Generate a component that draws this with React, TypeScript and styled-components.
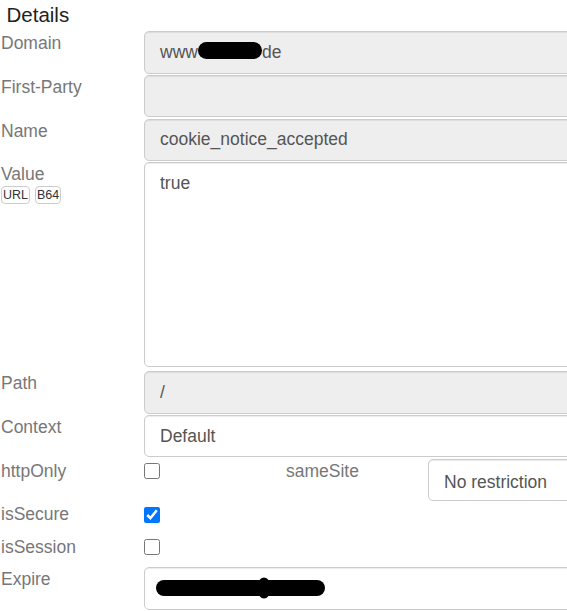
import React from "react";
import styled, { createGlobalStyle } from "styled-components";

const GlobalStyle = createGlobalStyle`
  html, body {
    margin: 0;
    padding: 0;
    background: #fff;
    overflow: hidden;
  }
  body {
    font-family: "Liberation Sans", Arial, sans-serif;
  }
`;

const Panel = styled.div`
  width: 760px;
  padding-left: 1px;
  box-sizing: border-box;
  font-size: 17.5px;
`;

const Heading = styled.h3`
  margin: 0;
  padding: 3px 0 4px 5.5px;
  font-size: 20.5px;
  line-height: 24px;
  font-weight: normal;
  color: #222;
`;

const Row = styled.div<{ $cols?: string; $height?: string; $gap?: string }>`
  display: grid;
  grid-template-columns: ${(p) => p.$cols ?? "143px 1fr"};
  height: ${(p) => p.$height ?? "auto"};
  margin-bottom: ${(p) => p.$gap ?? "1.25px"};
`;

const Label = styled.label`
  display: block;
  padding-top: 2px;
  line-height: 20px;
  font-size: 17.5px;
  color: #777;
`;

const LabelStack = styled.div`
  display: flex;
  flex-direction: column;
  gap: 2px;
`;

const Badges = styled.div`
  display: flex;
  gap: 5px;
`;

const Badge = styled.button`
  font-family: "Liberation Sans", Arial, sans-serif;
  font-size: 12.5px;
  line-height: 16px;
  height: 18px;
  padding: 0 1px;
  color: #333;
  background: #fff;
  border: 1px solid #ccc;
  border-radius: 4px;
  cursor: pointer;
`;

const fieldBase = `
  box-sizing: border-box;
  width: 100%;
  border: 1px solid #ccc;
  border-radius: 5px;
  box-shadow: inset 0 1px 1px rgba(0, 0, 0, 0.075);
  font-family: "Liberation Sans", Arial, sans-serif;
  font-size: 17.5px;
  color: #555;
  outline: none;
`;

const Input = styled.input<{ $readonly?: boolean }>`
  ${fieldBase}
  height: 42.5px;
  padding: 7.5px 15px;
  line-height: 25px;
  background: ${(p) => (p.$readonly ? "#eee" : "#fff")};
`;

const Field = styled.div<{ $readonly?: boolean }>`
  ${fieldBase}
  height: 42.5px;
  padding: 7.5px 15px;
  line-height: 25px;
  display: flex;
  align-items: center;
  white-space: nowrap;
  background: ${(p) => (p.$readonly ? "#eee" : "#fff")};
`;

const TextArea = styled.textarea`
  ${fieldBase}
  display: block;
  height: 205px;
  padding: 7.5px 15px;
  line-height: 25px;
  resize: none;
  background: #fff;
`;

const Select = styled.select`
  ${fieldBase}
  appearance: none;
  height: 42.5px;
  padding: 5px 15px 0;
  line-height: 25px;
  background: #fff;
`;

const Check = styled.input`
  width: 16px;
  height: 16px;
  margin: 4.5px 0 0 0;
`;

const Redaction = styled.span`
  display: inline-block;
  width: 64px;
  height: 17px;
  margin-top: -3px;
  border-radius: 9px;
  background: #000;
`;

const Scribble = styled.svg`
  margin-left: -5px;
  display: block;
`;

export default function App() {
  return (
    <>
      <GlobalStyle />
      <Panel>
        <Heading>Details</Heading>

        <Row>
          <Label>Domain</Label>
          <Field $readonly>
            www
            <Redaction />
            de
          </Field>
        </Row>

        <Row>
          <Label>First-Party</Label>
          <Input $readonly readOnly value="" />
        </Row>

        <Row>
          <Label>Name</Label>
          <Input $readonly readOnly value="cookie_notice_accepted" />
        </Row>

        <Row $gap="3.75px">
          <LabelStack>
            <Label>Value</Label>
            <Badges>
              <Badge>URL</Badge>
              <Badge>B64</Badge>
            </Badges>
          </LabelStack>
          <TextArea defaultValue="true" />
        </Row>

        <Row>
          <Label>Path</Label>
          <Input $readonly readOnly value="/" />
        </Row>

        <Row>
          <Label>Context</Label>
          <Input defaultValue="Default" />
        </Row>

        <Row $cols="143px 142px 142px 1fr" $height="42.5px">
          <Label>httpOnly</Label>
          <div>
            <Check type="checkbox" />
          </div>
          <Label>sameSite</Label>
          <Select defaultValue="no_restriction">
            <option value="no_restriction">No restriction</option>
            <option value="lax">Lax</option>
            <option value="strict">Strict</option>
          </Select>
        </Row>

        <Row $height="32.4px" $gap="0">
          <Label>isSecure</Label>
          <div>
            <Check type="checkbox" defaultChecked />
          </div>
        </Row>

        <Row $height="32.4px" $gap="0">
          <Label>isSession</Label>
          <div>
            <Check type="checkbox" />
          </div>
        </Row>

        <Row>
          <Label>Expire</Label>
          <Field>
            <Scribble width="176" height="24" viewBox="0 0 176 24">
              <path d="M9 12 H162" stroke="#000" strokeWidth="16" strokeLinecap="round" />
              <ellipse cx="109" cy="12" rx="7" ry="10.5" fill="#000" />
            </Scribble>
          </Field>
        </Row>
      </Panel>
    </>
  );
}
